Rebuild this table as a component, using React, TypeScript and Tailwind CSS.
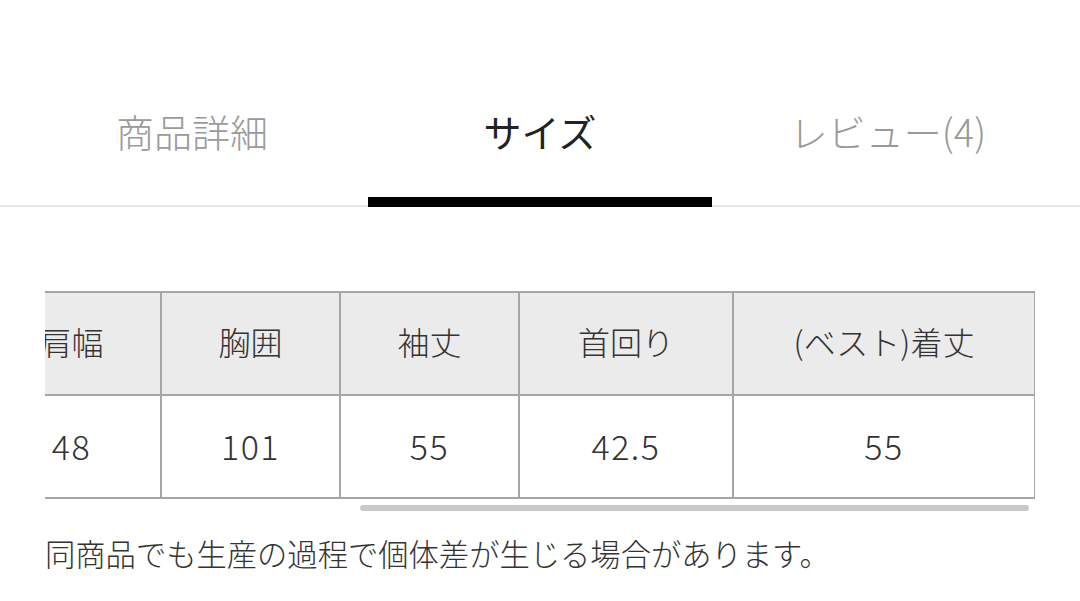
import React from "react";

const headers = ["肩幅", "胸囲", "袖丈", "首回り", "(ベスト)着丈"];
const values = ["48", "101", "55", "42.5", "55"];

export default function App() {
  return (
    <div
      className="w-[1080px] h-[601px] bg-white overflow-hidden font-light"
      style={{ fontFamily: '"Noto Sans CJK JP", "Noto Sans", sans-serif' }}
    >
      <div className="h-[207px] border-b-2 border-[#e8e8e8] grid grid-cols-[352px_344px_352px] px-4">
        {[
          { label: "商品詳細", active: false },
          { label: "サイズ", active: true },
          { label: "レビュー(4)", active: false },
        ].map((t) => (
          <div key={t.label} className="flex flex-col items-center">
            <div
              className={`mt-[108px] h-[46px] leading-[46px] text-[38px] ${
                t.active ? "text-[#222222] font-normal" : "text-[#9a9a9a]"
              }`}
            >
              {t.label}
            </div>
            {t.active ? (
              <div className="mt-auto mb-[-2px] h-[10px] w-full bg-black" />
            ) : null}
          </div>
        ))}
      </div>

      <div className="mt-[84px] ml-[45px] w-[990px] overflow-hidden">
        <div className="ml-[-62px] w-[1053px]">
          <div className="grid grid-cols-[179px_179px_179px_214px_302px] border-t-2 border-[#a6a6a6]">
            {headers.map((h) => (
              <div
                key={h}
                className="h-[103px] pb-[6px] bg-[#ebebeb] border-r-2 border-b-2 border-[#a6a6a6] flex items-center justify-center text-[32px] text-[#333333]"
              >
                {h}
              </div>
            ))}
            {values.map((v, i) => (
              <div
                key={i}
                className="h-[103px] pb-[2px] bg-white border-r-2 border-b-2 border-[#a6a6a6] flex items-center justify-center text-[34px] tracking-[1.5px] text-[#333333]"
              >
                {v}
              </div>
            ))}
          </div>
        </div>
        <div className="h-[6px] mt-[6px] ml-[315px] w-[669px] rounded-full bg-[#c8c8c8]" />
      </div>

      <div className="ml-[45px] mt-[22px] text-[30.3px] leading-[40px] text-[#333333]">
        同商品でも生産の過程で個体差が生じる場合があります。
      </div>
    </div>
  );
}
